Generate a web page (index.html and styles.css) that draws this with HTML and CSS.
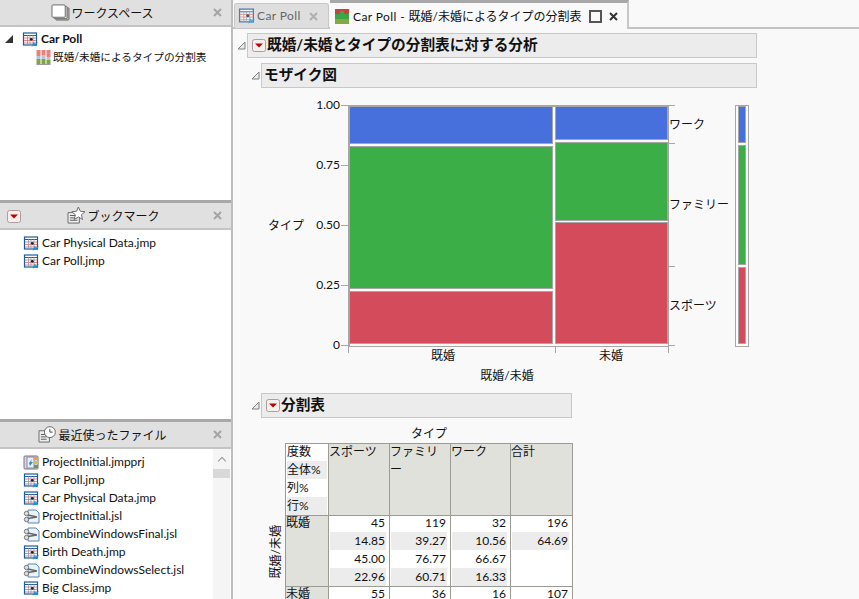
FILE: index.html
```html
<!DOCTYPE html>
<html lang="ja">
<head>
<meta charset="utf-8">
<title>Car Poll</title>
<link rel="stylesheet" href="styles.css">
</head>
<body>
<svg class="defs" width="0" height="0" aria-hidden="true">
  <defs>
    <symbol id="i-jmp" viewBox="0 0 17 15">
      <rect x="1.500" y="1" width="13" height="12" fill="#fff" stroke="#1c5c9c" stroke-width="1.200"/>
      <path d="M2 3.500h12" stroke="#1c5c9c" stroke-width="1"/>
      <path d="M2 6h12M2 8.500h12M2 11h12" stroke="#e06a6a" stroke-width=".8"/>
      <path d="M5.500 3v10M8 3v10M11 3v10" stroke="#8c8ca0" stroke-width=".7"/>
      <circle cx="9.300" cy="7.300" r="1.400" fill="#222"/>
      <path d="M9.500 14.500l2.500-5 .8 2.200 3.200-1.700-2 3 1.200 1.200-3-.5z" fill="#1f8fd8"/>
    </symbol>
    <symbol id="i-jsl" viewBox="0 0 17 15">
      <path d="M5 1h8l3 3v10H5z" fill="#eaf2fa" stroke="#5b86b3"/>
      <circle cx="3.500" cy="4.500" r="2.200" fill="#ddd" stroke="#777"/>
      <circle cx="3.500" cy="10.500" r="2.200" fill="#ddd" stroke="#777"/>
      <path d="M5 6l9 2M5 9.500l9-1.500" stroke="#666" stroke-width="1.300"/>
    </symbol>
    <symbol id="i-prj" viewBox="0 0 17 15">
      <rect x="1" y="1" width="14" height="13" rx="1" fill="#d8d4e4" stroke="#777"/>
      <rect x="4" y="2" width="7" height="11" fill="#eef" stroke="#88a"/>
      <path d="M11 2h4v3h-4z" fill="#e8a23a"/>
      <path d="M11 6h4v3h-4z" fill="#d8c040"/>
      <path d="M11 10h4v3h-4z" fill="#6a9e3a"/>
      <path d="M6 8l3-4-1 3h2l-3 4z" fill="#2a8fd0"/>
    </symbol>
    <symbol id="i-mosaic" viewBox="0 0 14 15">
      <rect x="0" width="4" height="6" fill="#e8827e"/><rect x="0" y="6" width="4" height="3" fill="#b8c4d8"/><rect x="0" y="9" width="4" height="5" fill="#7fa545"/>
      <rect x="5" width="4" height="5" fill="#e8827e"/><rect x="5" y="5" width="4" height="4" fill="#b8c4d8"/><rect x="5" y="9" width="4" height="5" fill="#7fa545"/>
      <rect x="10" width="4" height="7" fill="#e8827e"/><rect x="10" y="7" width="4" height="3" fill="#b8c4d8"/><rect x="10" y="10" width="4" height="4" fill="#7fa545"/>
      <path d="M0 14.500h14" stroke="#999"/>
    </symbol>
    <symbol id="i-menu" viewBox="0 0 14 13">
      <rect x=".5" y=".5" width="13" height="12" rx="2" fill="#f4f0f0" stroke="#b09a9a"/>
      <path d="M3 4.500h8l-4 4z" fill="#c00000"/>
    </symbol>
    <symbol id="i-x" viewBox="0 0 9 9">
      <path d="M1 1l7 7M8 1l-7 7" stroke="currentColor" stroke-width="2" fill="none"/>
    </symbol>
    <symbol id="i-disc" viewBox="0 0 9 9">
      <path d="M8 1v7H1z" fill="#ececec" stroke="#808080"/>
    </symbol>
  </defs>
</svg>

<aside class="sidebar">
  <section class="panel panel-workspace">
    <header class="panel-head">
      <span class="panel-title">
        <svg class="head-icon" viewBox="0 0 20 18"><rect x="5" y="4" width="14" height="13" rx="1" fill="#bbb" stroke="#666"/><rect x="3" y="2.500" width="14" height="13" rx="1" fill="#ddd" stroke="#666"/><rect x="1" y="1" width="14" height="13" rx="1" fill="#fff" stroke="#666"/></svg>
        <span class="title-text">ワークスペース</span>
      </span>
      <svg class="panel-close"><use href="#i-x"/></svg>
    </header>
    <div class="panel-body tree">
      <div class="row row-root"><span class="tree-arrow"></span><svg class="icon"><use href="#i-jmp"/></svg><span>Car Poll</span></div>
      <div class="row row-child"><svg class="icon icon-mosaic"><use href="#i-mosaic"/></svg><span>既婚/未婚によるタイプの分割表</span></div>
    </div>
  </section>

  <section class="panel panel-bookmarks">
    <header class="panel-head">
      <svg class="menu-btn"><use href="#i-menu"/></svg>
      <span class="panel-title panel-title-shift">
        <svg class="head-icon" viewBox="0 0 20 18"><path d="M1 6h12v11H1z" fill="#eee" stroke="#666"/><path d="M3 9h8M3 11.500h8M3 14h8" stroke="#555"/><path d="M12 0l2 4.500 5 .5-3.800 3.200 1.200 5-4.400-2.700-4.400 2.700 1.200-5L5 5l5-.5z" fill="#fff" stroke="#666"/></svg>
        <span class="title-text">ブックマーク</span>
      </span>
      <svg class="panel-close"><use href="#i-x"/></svg>
    </header>
    <div class="panel-body list">
      <div class="row"><svg class="icon"><use href="#i-jmp"/></svg><span>Car Physical Data.jmp</span></div>
      <div class="row"><svg class="icon"><use href="#i-jmp"/></svg><span>Car Poll.jmp</span></div>
    </div>
  </section>

  <section class="panel panel-recent">
    <header class="panel-head">
      <span class="panel-title">
        <svg class="head-icon" viewBox="0 0 20 18"><path d="M1 5h11v12H1z" fill="#eee" stroke="#666"/><path d="M3 9h6M3 11.500h6M3 14h6" stroke="#555"/><circle cx="12.500" cy="6.500" r="5.800" fill="#fff" stroke="#666"/><path d="M12.500 3v3.500h3" fill="none" stroke="#444"/></svg>
        <span class="title-text">最近使ったファイル</span>
      </span>
      <svg class="panel-close"><use href="#i-x"/></svg>
    </header>
    <div class="panel-body recent">
      <div class="list">
        <div class="row"><svg class="icon"><use href="#i-prj"/></svg><span>ProjectInitial.jmpprj</span></div>
        <div class="row"><svg class="icon"><use href="#i-jmp"/></svg><span>Car Poll.jmp</span></div>
        <div class="row"><svg class="icon"><use href="#i-jmp"/></svg><span>Car Physical Data.jmp</span></div>
        <div class="row"><svg class="icon"><use href="#i-jsl"/></svg><span>ProjectInitial.jsl</span></div>
        <div class="row"><svg class="icon"><use href="#i-jsl"/></svg><span>CombineWindowsFinal.jsl</span></div>
        <div class="row"><svg class="icon"><use href="#i-jmp"/></svg><span>Birth Death.jmp</span></div>
        <div class="row"><svg class="icon"><use href="#i-jsl"/></svg><span>CombineWindowsSelect.jsl</span></div>
        <div class="row"><svg class="icon"><use href="#i-jmp"/></svg><span>Big Class.jmp</span></div>
        <div class="row"><svg class="icon"><use href="#i-jsl"/></svg><span></span></div>
      </div>
      <div class="scrollbar"><span class="scroll-up"></span><span class="scroll-thumb"></span></div>
    </div>
  </section>
</aside>

<main class="main">
  <nav class="tabs">
    <div class="tab tab-off">
      <svg class="icon icon-tab-off"><use href="#i-jmp"/></svg><span class="tab-latin">Car Poll</span><svg class="tab-x"><use href="#i-x"/></svg>
    </div>
    <div class="tab tab-on">
      <svg class="icon icon-mosaic-tab" viewBox="0 0 14 15"><rect width="14" height="5" fill="#c9413f"/><rect y="5" width="14" height="5" fill="#3aa648"/><rect x="5" y="2" width="4" height="4" fill="#3aa648"/><rect y="10" width="14" height="5" fill="#86a840"/></svg>
      <span><span class="tab-latin">Car Poll - </span>既婚/未婚によるタイプの分割表</span>
      <span class="tab-max"></span><svg class="tab-x tab-x-on"><use href="#i-x"/></svg>
    </div>
  </nav>

  <div class="report">
    <div class="outline outline-top">
      <svg class="disclosure"><use href="#i-disc"/></svg>
      <div class="outline-bar"><svg class="menu-btn"><use href="#i-menu"/></svg><h1>既婚/未婚とタイプの分割表に対する分析</h1></div>
    </div>

    <div class="outline outline-sub outline-plot">
      <svg class="disclosure"><use href="#i-disc"/></svg>
      <div class="outline-bar"><h2>モザイク図</h2></div>
    </div>

    <svg class="mosaic" viewBox="0 0 600 288" width="600" height="288">
      <g class="chart-frame">
        <path d="M79 0.500h7M79 60.500h7M79 120.500h7M79 180.500h7M79 240.500h7"/>
        <path class="thick" d="M87 0v241M86 1h320"/>
        <path d="M86 241.500h321M86.500 241v7M293.500 241v7M406.500 0v248"/>
        <path d="M406 0.500h7M406 38.500h7M406 161.500h7M406 240.500h7"/>
      </g>
      <g class="tiles">
        <rect class="t-blue" x="87.500" y="1.500" width="203" height="37"/>
        <rect class="t-green" x="87.500" y="41.500" width="203" height="142"/>
        <rect class="t-red" x="87.500" y="186.500" width="203" height="52"/>
        <rect class="t-blue" x="293.500" y="1.500" width="112" height="33"/>
        <rect class="t-green" x="293.500" y="37.500" width="112" height="78"/>
        <rect class="t-red" x="293.500" y="117.500" width="112" height="121"/>
      </g>
      <g class="chart-text">
        <text x="78" y="4" text-anchor="end">1.00</text>
        <text x="78" y="64" text-anchor="end">0.75</text>
        <text x="78" y="124" text-anchor="end">0.50</text>
        <text x="78" y="184" text-anchor="end">0.25</text>
        <text x="78" y="244" text-anchor="end">0</text>
        <text x="6" y="125">タイプ</text>
        <text x="181" y="255" text-anchor="middle">既婚</text>
        <text x="349" y="255" text-anchor="middle">未婚</text>
        <text x="245" y="275" text-anchor="middle">既婚/未婚</text>
        <text x="407" y="24">ワーク</text>
        <text x="407" y="104">ファミリー</text>
        <text x="407" y="205">スポーツ</text>
      </g>
      <rect class="legend-frame" x="473.500" y="0.500" width="13" height="241"/>
      <g class="tiles">
        <rect class="t-blue" x="476.500" y="1.500" width="7" height="36"/>
        <rect class="t-green" x="476.500" y="40.500" width="7" height="119"/>
        <rect class="t-red" x="476.500" y="162.500" width="7" height="76"/>
      </g>
    </svg>

    <div class="outline outline-sub outline-table">
      <svg class="disclosure"><use href="#i-disc"/></svg>
      <div class="outline-bar"><svg class="menu-btn"><use href="#i-menu"/></svg><h2>分割表</h2></div>
    </div>

    <div class="crosstab-wrap">
      <div class="crosstab-top">タイプ</div>
      <div class="crosstab-body">
        <div class="side-label"><span>既婚/未婚</span></div>
        <table class="crosstab">
          <colgroup><col class="c0"><col class="c1"><col class="c1"><col class="c2"><col class="c3"></colgroup>
          <tr class="head-row">
            <th class="legend"><div>度数</div><div class="st">全体%</div><div>列%</div><div class="st">行%</div></th>
            <th><div>スポーツ</div></th><th><div>ファミリー</div></th><th><div>ワーク</div></th><th><div>合計</div></th>
          </tr>
          <tr>
            <th class="rowh"><div>既婚</div></th>
            <td><div>45</div><div class="st">14.85</div><div>45.00</div><div class="st">22.96</div></td>
            <td><div>119</div><div class="st">39.27</div><div>76.77</div><div class="st">60.71</div></td>
            <td><div>32</div><div class="st">10.56</div><div>66.67</div><div class="st">16.33</div></td>
            <td><div>196</div><div class="st">64.69</div><div>&nbsp;</div><div>&nbsp;</div></td>
          </tr>
          <tr>
            <th class="rowh"><div>未婚</div></th>
            <td><div>55</div></td><td><div>36</div></td><td><div>16</div></td><td><div>107</div></td>
          </tr>
        </table>
      </div>
    </div>
  </div>
</main>
</body>
</html>
```
FILE: styles.css
```css
* { box-sizing: border-box; }
html, body { height: 100%; }
body {
  margin: 0;
  width: 859px;
  height: 599px;
  overflow: hidden;
  display: flex;
  background: #f9f9f9;
  color: #111;
  font: 12px/18px Lato, "Noto Sans CJK JP", sans-serif;
}
.defs { position: absolute; }
.sidebar {
  width: 233px;
  flex: none;
  display: flex;
  flex-direction: column;
  height: 599px;
  background: #a8a8a8;
  border-right: 2px solid #bdbdbd;
  gap: 3px;
}
.panel { display: flex; flex-direction: column; background: #fff; overflow: hidden; }
.panel-workspace { height: 200px; }
.panel-bookmarks { height: 216px; }
.panel-recent { flex: 1; }
.panel-head {
  height: 27px;
  flex: none;
  position: relative;
  display: flex;
  align-items: center;
  justify-content: center;
  background: #e0e0e0;
  border-bottom: 2px solid #c4c4c4;
  font-size: 12px;
  padding-right: 26px;
}
.panel-title { display: flex; align-items: center; gap: 1px; }
.panel-title-shift { margin-left: 22px; }
.title-text { padding-top: 2px; }
.head-icon { width: 19px; height: 17px; }
.panel-close {
  position: absolute;
  right: 9px;
  top: 8px;
  width: 9px;
  height: 9px;
  color: #a4a4a4;
}
.panel-head .menu-btn { position: absolute; left: 7px; top: 7px; }
.menu-btn { width: 14px; height: 13px; flex: none; }
.panel-body { flex: 1; }
.row { display: flex; align-items: center; height: 18px; white-space: nowrap; }
.icon { width: 17px; height: 15px; flex: none; margin-right: 2px; }
.tree { padding-top: 3px; }
.tree-arrow {
  width: 0; height: 0;
  margin: 0 9px 0 5px;
  border-style: solid;
  border-width: 0 0 8px 8px;
  border-color: transparent transparent #333 transparent;
}
.row-root span:last-child { font-weight: 700; }
.row-child { padding-left: 36px; font-size: 10.650px; }
.row-child .icon-mosaic { width: 15px; height: 15px; margin-right: 2px; }
.list { padding: 4px 0 0 23px; }
.recent { display: flex; }
.recent .list { flex: 1; padding-top: 4px; }
.scrollbar {
  width: 17px;
  margin-right: 1px;
  background: #f5f5f5;
  display: flex;
  flex-direction: column;
}
.scroll-up { height: 20px; flex: none; }
.scroll-up::before {
  content: "";
  display: block;
  width: 5px; height: 5px;
  margin: 9px auto 0;
  border-left: 1px solid #999;
  border-top: 1px solid #999;
  transform: rotate(45deg);
}
.scroll-thumb { height: 9px; background: #d8d8d8; }
.main { flex: 1; min-width: 0; display: flex; flex-direction: column; }
.tabs {
  height: 29px;
  flex: none;
  display: flex;
  align-items: flex-end;
  background: #f9f9f9;
  border-bottom: 2px solid #c4c4c4;
  padding-left: 1px;
  white-space: nowrap;
}
.tab { display: flex; align-items: center; flex: none; }
.tab-latin { letter-spacing: .4px; white-space: pre; }
.tab-off {
  width: 95px;
  height: 25px;
  margin-bottom: -1px;
  background: #dedede;
  color: #666;
  padding-left: 3px;
  border: 1px solid #c8c8c8;
  border-bottom: 0;
  border-radius: 3px 3px 0 0;
}
.icon-tab-off { width: 18px; height: 18px; opacity: .75; margin-right: 1px; }
.tab-x { width: 9px; height: 9px; color: #b0b0b0; margin-left: 8px; flex: none; }
.tab-on {
  width: 299px;
  height: 29px;
  margin-left: 1px;
  margin-bottom: -2px;
  background: #f9f9f9;
  padding: 1px 0 0 5px;
  border-top: 3px solid #a8a8a8;
  border-right: 2px solid #c8c8c8;
}
.tab-on .icon { width: 14px; height: 15px; margin-right: 4px; }
.tab-max { width: 13px; height: 13px; border: 2px solid #555; margin-left: 7px; flex: none; }
.tab-x-on { color: #333; margin-left: 7px; }
.report { flex: 1; padding: 4px 0 0 4px; overflow: hidden; }
.outline { display: flex; align-items: center; }
.disclosure { width: 9px; height: 9px; flex: none; margin-right: 1px; }
.outline-bar {
  height: 25px;
  display: flex;
  align-items: center;
  gap: 1px;
  background: #ececec;
  border: 1px solid #c8c8c8;
  padding-left: 4px;
}
.outline-top .outline-bar { width: 510px; }
.outline-sub { margin: 0 0 0 14px; }
.outline-plot { margin-top: 5px; }
.outline-plot .outline-bar { width: 496px; padding-left: 2px; }
.outline-table .outline-bar { width: 311px; }
h1, h2 { margin: -2px 0 0; font-size: 14.670px; font-weight: 700; line-height: 20px; }
.mosaic { display: block; margin: 17px 0 0 25px; overflow: visible; }
.chart-frame path { fill: none; stroke: #a6a6a6; stroke-width: 1; }
.chart-frame path.thick { stroke-width: 2; }
.tiles rect { stroke: #a6a6a6; stroke-width: 1; }
.t-blue { fill: #4870dc; }
.t-green { fill: #3cae48; }
.t-red { fill: #d44b5c; }
.legend-frame { fill: #fbfbfb; stroke: #a6a6a6; stroke-width: 1; }
.chart-text text { font-size: 12px; fill: #111; font-family: Lato, "Noto Sans CJK JP", sans-serif; }
.crosstab-wrap { margin-left: 31px; width: 305px; }
.crosstab-top { text-align: center; height: 18px; margin: 7px 0 0 17px; }
.crosstab-body { display: flex; }
.side-label { width: 17px; flex: none; }
.side-label span {
  display: block;
  writing-mode: vertical-rl;
  text-orientation: sideways;
  transform: rotate(180deg);
  margin-top: 82px;
  line-height: 15px;
}
.crosstab { border-collapse: collapse; background: #fff; table-layout: fixed; width: 287px; }
.c0 { width: 43px; }
.c1 { width: 61px; }
.c2 { width: 60px; }
.c3 { width: 62px; }
.crosstab th, .crosstab td {
  border: 1px solid #9c9c94;
  padding: 0 1px 0 0;
  vertical-align: top;
  line-height: 18px;
  font-weight: 400;
}
.crosstab th { background: #e1e1dc; text-align: left; }
.crosstab th.legend { background: #fff; padding-left: 1px; }
.crosstab td { text-align: right; padding: 0 3px 0 1px; }
.crosstab td div { padding-right: 1px; }
.crosstab td > div:first-child, .rowh > div { margin-top: -2px; }
.head-row th > div:first-child { margin-top: -1px; }
.st { background: #ececec; }
```
